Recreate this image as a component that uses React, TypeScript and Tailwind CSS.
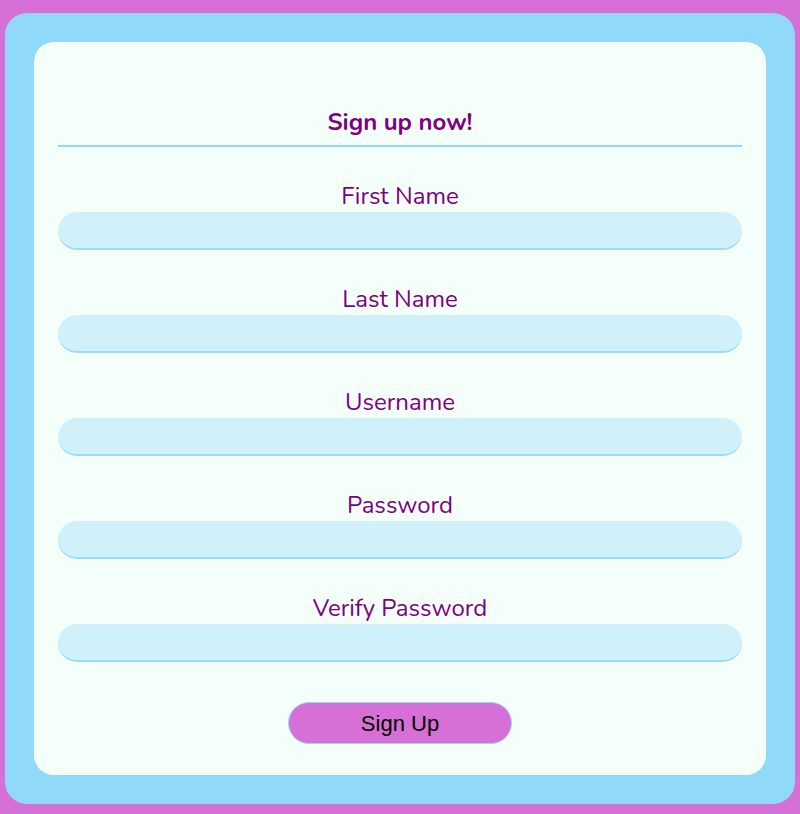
export default function App() {
  const fields = ['First Name', 'Last Name', 'Username', 'Password', 'Verify Password'];
  return (
    <div className="min-h-[814px] bg-[#d670d6] px-[5px] pt-[13px] pb-[10px]">
      <div className="rounded-[22px] bg-[#90d9f8] p-[29px]">
        <div
          className="rounded-[20px] bg-[#f5fff9] px-6 pt-[64px] pb-[31px]"
          style={{ fontFamily: 'Nunito, Lato, "Noto Sans", sans-serif' }}
        >
          <h1 className="border-b-2 border-[#90d9f8] pb-[7px] text-center text-[24px] font-bold leading-[32px] text-[#800080]">
            Sign up now!
          </h1>
          <div className="mt-[34px] flex flex-col gap-[34px]">
            {fields.map((f) => (
              <label key={f} className="flex flex-col">
                <span className="text-center text-[24px] leading-[30px] text-[#800080]">{f}</span>
                <input
                  type={f.includes('Password') ? 'password' : 'text'}
                  className="mt-px h-[38px] w-full rounded-full border-b-2 border-[#9ddcf6] bg-[#d0f1f9] px-4 outline-none"
                />
              </label>
            ))}
          </div>
          <div className="mt-[40px] flex justify-center">
            <button
              className="h-[42px] w-[224px] rounded-full border border-[#90d9f8] bg-[#d670d6] text-[22px] text-black"
              style={{ fontFamily: '"Liberation Sans", Arial, sans-serif' }}
            >
              Sign Up
            </button>
          </div>
        </div>
      </div>
    </div>
  );
}
